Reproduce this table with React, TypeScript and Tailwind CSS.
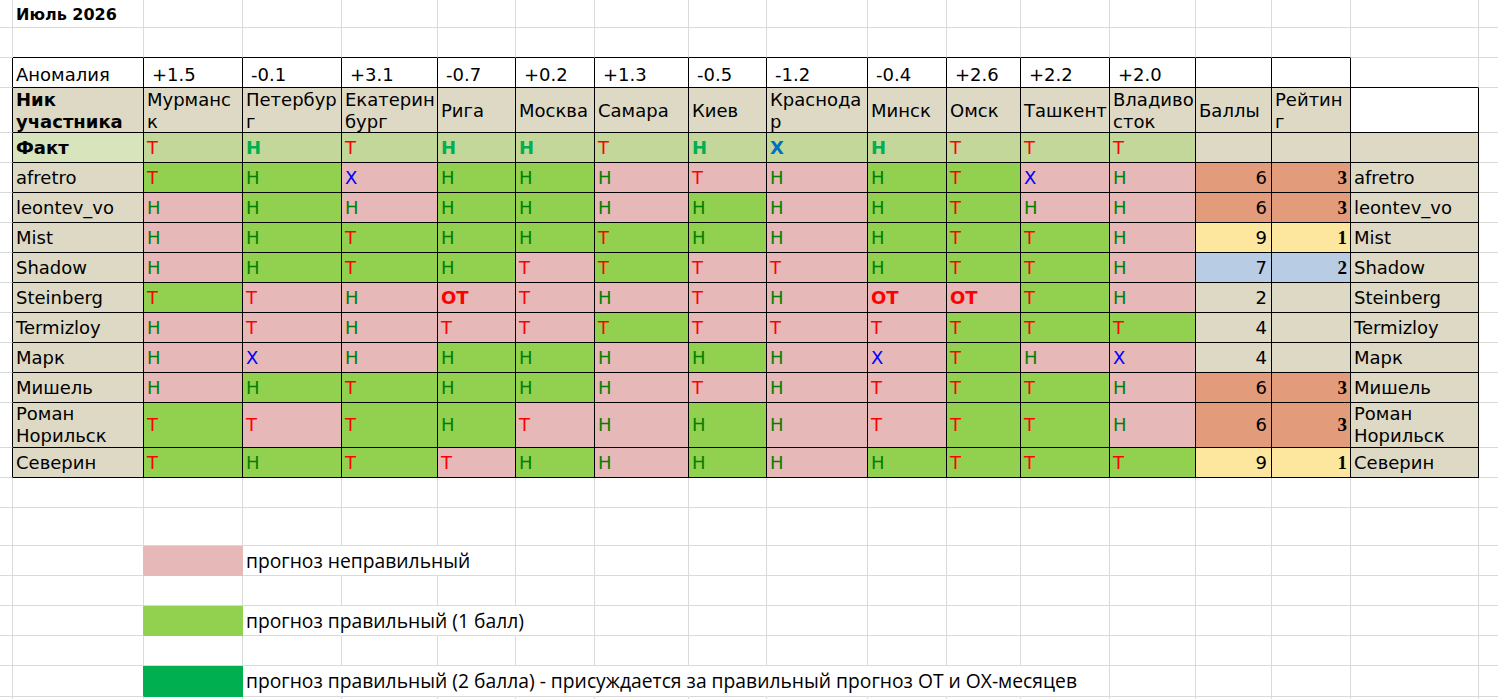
import React from 'react';

const COLS = [
  'w-[13px]', 'w-[131px]', 'w-[99px]', 'w-[99px]', 'w-[96px]', 'w-[78px]', 'w-[79px]', 'w-[94px]', 'w-[78px]',
  'w-[101px]', 'w-[79px]', 'w-[74px]', 'w-[89px]', 'w-[86px]', 'w-[76px]', 'w-[79px]', 'w-[128px]', 'w-[40px]',
];
const NCOL = COLS.length;

type CellSpec = {
  content?: React.ReactNode;
  cls?: string;
  bR?: string;
  bB?: string;
};

type RowSpec = {
  h: string;
  cells: Record<number, CellSpec>;
  table: number[];
  hideR?: number[];
};

const range = (a: number, b: number) => Array.from({ length: b - a + 1 }, (_, i) => a + i);

const CITIES: React.ReactNode[] = [
  <>Мурманс<br />к</>,
  <>Петербур<br />г</>,
  <>Екатерин<br />бург</>,
  'Рига',
  'Москва',
  'Самара',
  'Киев',
  <>Краснода<br />р</>,
  'Минск',
  'Омск',
  'Ташкент',
  <>Владиво<br />сток</>,
];

const ANOM = ['+1.5', '-0.1', '+3.1', '-0.7', '+0.2', '+1.3', '-0.5', '-1.2', '-0.4', '+2.6', '+2.2', '+2.0'];
const FACT = ['Т', 'Н', 'Т', 'Н', 'Н', 'Т', 'Н', 'Х', 'Н', 'Т', 'Т', 'Т'];

type Player = { name: React.ReactNode; picks: string; score: number; rank: string; tone: 'o' | 'y' | 'b' | 't'; tall?: boolean };

const PLAYERS: Player[] = [
  { name: 'afretro', picks: 'Т+ Н+ Х- Н+ Н+ Н- Т- Н- Н+ Т+ Х- Н-', score: 6, rank: '3', tone: 'o' },
  { name: 'leontev_vo', picks: 'Н- Н+ Н- Н+ Н+ Н- Н+ Н- Н+ Т+ Н- Н-', score: 6, rank: '3', tone: 'o' },
  { name: 'Mist', picks: 'Н- Н+ Т+ Н+ Н+ Т+ Н+ Н- Н+ Т+ Т+ Н-', score: 9, rank: '1', tone: 'y' },
  { name: 'Shadow', picks: 'Н- Н+ Т+ Н+ Т- Т+ Т- Т- Н+ Т+ Т+ Н-', score: 7, rank: '2', tone: 'b' },
  { name: 'Steinberg', picks: 'Т+ Т- Н- ОТ- Т- Н- Т- Н- ОТ- ОТ- Т+ Н-', score: 2, rank: '', tone: 't' },
  { name: 'Termizloy', picks: 'Н- Т- Н- Т- Т- Т+ Т- Т- Т- Т+ Т+ Т+', score: 4, rank: '', tone: 't' },
  { name: 'Марк', picks: 'Н- Х- Н- Н+ Н+ Н- Н+ Н- Х- Т+ Н- Х-', score: 4, rank: '', tone: 't' },
  { name: 'Мишель', picks: 'Н- Н+ Т+ Н+ Н+ Н- Т- Н- Т- Т+ Т+ Н-', score: 6, rank: '3', tone: 'o' },
  { name: <>Роман<br />Норильск</>, picks: 'Т+ Т- Т+ Н+ Т- Н- Н+ Н- Т- Т+ Т+ Н-', score: 6, rank: '3', tone: 'o', tall: true },
  { name: 'Северин', picks: 'Т+ Н+ Т+ Т- Н+ Н- Н+ Н- Н+ Т+ Т+ Т+', score: 9, rank: '1', tone: 'y' },
];

const TONE_BG: Record<string, string> = {
  o: 'bg-[#e29b7b]',
  y: 'bg-[#fde79f]',
  b: 'bg-[#b8cce4]',
  t: 'bg-[#ddd9c4]',
};

function Letter({ v }: { v: string }) {
  if (v === 'Т') return <span className="text-[#ff0000]">Т</span>;
  if (v === 'Н') return <span className="text-[#008000]">Н</span>;
  if (v === 'Х') return <span className="text-[#0000ff]">Х</span>;
  return <span className="text-[#ff0000] font-bold">ОТ</span>;
}

function FactLetter({ v }: { v: string }) {
  if (v === 'Т') return <span className="text-[#ff0000]">Т</span>;
  if (v === 'Н') return <span className="text-[#00b050] font-bold">Н</span>;
  return <span className="text-[#0070c0] font-bold">Х</span>;
}

function buildRows(): RowSpec[] {
  const rows: RowSpec[] = [];
  rows.push({
    h: 'h-[28px]',
    table: [],
    cells: { 1: { content: <span className="font-bold text-[16px]">Июль 2026</span>, cls: 'items-center pl-[3px] pt-px' } },
  });
  rows.push({ h: 'h-[30px]', table: [], cells: {} });

  const anom: Record<number, CellSpec> = { 1: { content: 'Аномалия', cls: 'items-end pb-px pl-[3px]' } };
  ANOM.forEach((a, i) => {
    anom[i + 2] = { content: a, cls: 'items-end pb-px pl-[8px]' };
  });
  rows.push({ h: 'h-[30px]', table: range(1, 15), cells: anom });

  const head: Record<number, CellSpec> = {
    1: { content: <span className="font-bold">Ник<br />участника</span>, cls: 'items-center pl-[3px] bg-[#ddd9c4] pt-px' },
    14: { content: 'Баллы', cls: 'items-center pl-[3px] bg-[#ddd9c4] pt-px' },
    15: { content: <>Рейтин<br />г</>, cls: 'items-center pl-[3px] bg-[#ddd9c4] pt-px' },
    16: { content: '', cls: 'bg-white' },
  };
  CITIES.forEach((c, i) => {
    head[i + 2] = { content: c, cls: 'items-center pl-[3px] bg-[#ddd9c4] pt-px' };
  });
  rows.push({ h: 'h-[45px]', table: range(1, 16), cells: head });

  const fact: Record<number, CellSpec> = {
    1: { content: <span className="font-bold">Факт</span>, cls: 'items-center pl-[3px] bg-[#d8e4bc]' },
    14: { cls: 'bg-[#ddd9c4]' },
    15: { cls: 'bg-[#ddd9c4]' },
    16: { cls: 'bg-[#ddd9c4]' },
  };
  FACT.forEach((f, i) => {
    fact[i + 2] = { content: <FactLetter v={f} />, cls: 'items-center pl-[3px] bg-[#c4d79b]' };
  });
  rows.push({ h: 'h-[30px]', table: range(1, 16), cells: fact });

  PLAYERS.forEach((p) => {
    const cells: Record<number, CellSpec> = {
      1: { content: p.name, cls: 'items-center pl-[3px] bg-[#ddd9c4]' },
      14: { content: String(p.score), cls: `items-center justify-end pr-[4px] ${TONE_BG[p.tone]}` },
      15: {
        content: <span className="font-['Liberation_Serif',serif] font-bold text-[19px]">{p.rank}</span>,
        cls: `items-center justify-end pr-[3px] ${TONE_BG[p.tone]}`,
      },
      16: { content: p.name, cls: 'items-center pl-[3px] bg-[#ddd9c4]' },
    };
    p.picks.split(' ').forEach((tok, i) => {
      const ok = tok.endsWith('+');
      const v = tok.slice(0, -1);
      cells[i + 2] = {
        content: <Letter v={v} />,
        cls: `items-center pl-[3px] ${ok ? 'bg-[#92d050]' : 'bg-[#e6b8b7]'}`,
      };
    });
    rows.push({ h: p.tall ? 'h-[45px]' : 'h-[30px]', table: range(1, 16), cells });
  });

  rows.push({ h: 'h-[30px]', table: [], cells: {} });
  rows.push({ h: 'h-[38px]', table: [], cells: {} });

  const legendText = "items-center pl-[3px] whitespace-nowrap font-['Open_Sans',sans-serif] text-[19.3px] leading-[24px]";

  rows.push({
    h: 'h-[30px]',
    table: [],
    hideR: [3, 4],
    cells: {
      1: { bR: 'border-r-[#e6b8b7]' },
      2: { cls: 'bg-[#e6b8b7]', bR: 'border-r-[#e6b8b7]', bB: 'border-b-[#e6b8b7]' },
      3: { content: 'прогноз неправильный', cls: legendText },
    },
  });
  rows.push({ h: 'h-[30px]', table: [], cells: {} });
  rows.push({
    h: 'h-[30px]',
    table: [],
    hideR: [3, 4, 5],
    cells: {
      1: { bR: 'border-r-[#92d050]' },
      2: { cls: 'bg-[#92d050]', bR: 'border-r-[#92d050]', bB: 'border-b-[#92d050]' },
      3: { content: 'прогноз правильный (1 балл)', cls: legendText },
    },
  });
  rows.push({ h: 'h-[30px]', table: [], cells: {} });
  rows.push({
    h: 'h-[31px]',
    table: [],
    hideR: range(3, 11),
    cells: {
      1: { bR: 'border-r-[#00b050]' },
      2: { cls: 'bg-[#00b050]', bR: 'border-r-[#00b050]', bB: 'border-b-[#00b050]' },
      3: {
        content: 'прогноз правильный (2 балла) - присуждается за правильный прогноз ОТ и ОХ-месяцев',
        cls: legendText,
      },
    },
  });
  rows.push({ h: 'h-[30px]', table: [], cells: {} });
  return rows;
}

export default function App() {
  const rows = buildRows();
  return (
    <div className="w-[1498px] h-[699px] overflow-hidden bg-white font-['DejaVu_Sans',sans-serif] text-[18px] leading-[22px] text-black">
      {rows.map((row, r) => {
        const next = rows[r + 1];
        return (
          <div key={r} className={`flex ${row.h}`}>
            {Array.from({ length: NCOL }).map((_, c) => {
              const spec = row.cells[c] || {};
              const inT = row.table.includes(c);
              const rightT = row.table.includes(c + 1);
              const belowT = next ? next.table.includes(c) : false;
              let bR = inT || rightT ? 'border-r-black' : row.hideR && row.hideR.includes(c) ? 'border-r-transparent' : 'border-r-[#dadada]';
              let bB = inT || belowT ? 'border-b-black' : 'border-b-[#dadada]';
              if (spec.bR) bR = spec.bR;
              if (spec.bB) bB = spec.bB;
              return (
                <div
                  key={c}
                  className={`${COLS[c]} shrink-0 box-border border-r border-b flex overflow-visible ${bR} ${bB} ${spec.cls || ''}`}
                >
                  {spec.content !== undefined && spec.content !== '' ? <div className="whitespace-nowrap">{spec.content}</div> : null}
                </div>
              );
            })}
          </div>
        );
      })}
    </div>
  );
}
